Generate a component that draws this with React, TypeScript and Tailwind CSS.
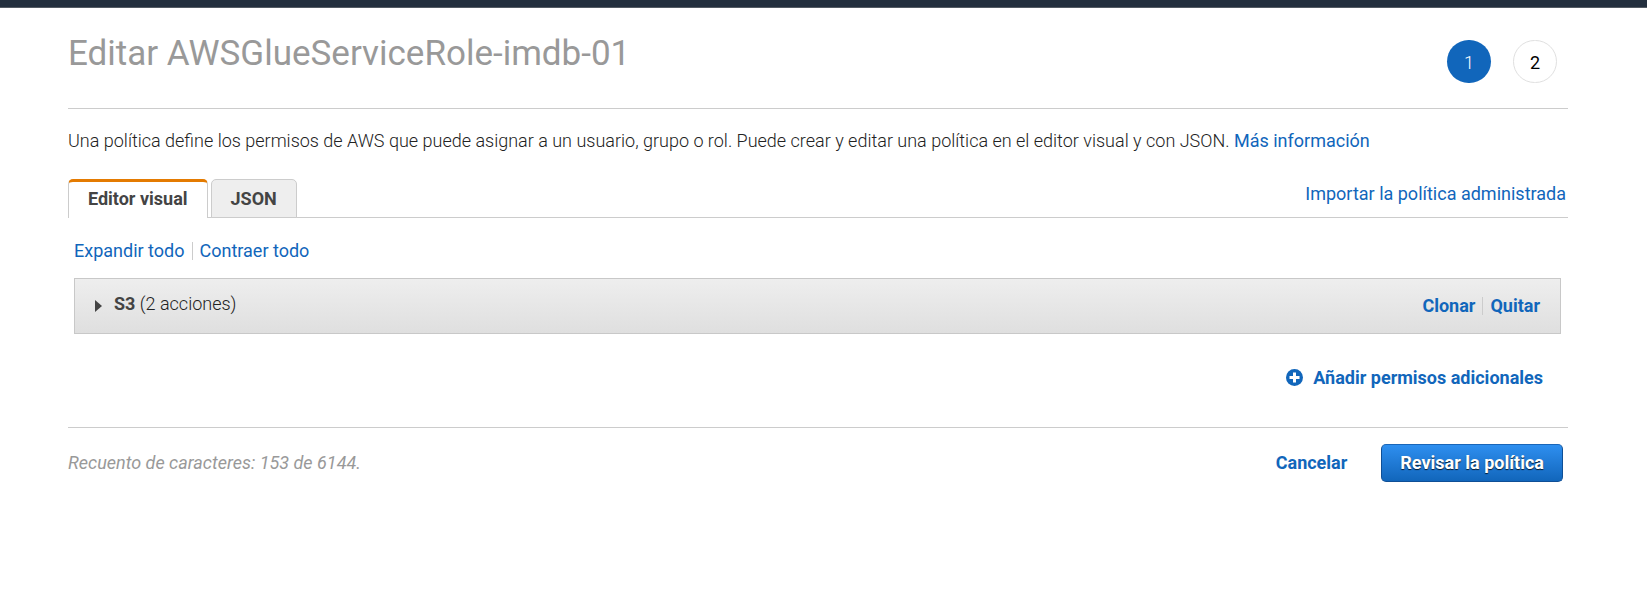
import React from "react";

const link = "font-normal text-[#1166bb] hover:underline";

function Divider() {
  return <span aria-hidden="true" className="h-[18px] w-px bg-[#cccccc]" />;
}

function Header() {
  return (
    <header className="flex items-start justify-between border-b border-[#cccccc] pt-5 pb-[25px]">
      <h1 className="text-[35px] leading-[52px] text-[#999999]">Editar AWSGlueServiceRole-imdb-01</h1>
      <ol className="mt-3 mr-[11px] flex gap-[22px] text-[18px]">
        <li
          aria-current="step"
          className="flex h-[43px] w-11 items-center justify-center rounded-full bg-[#1166bb] pt-0.5 font-light text-white"
        >
          1
        </li>
        <li className="flex h-[43px] w-11 items-center justify-center rounded-full border border-[#e0e0e0] pt-0.5 text-black">
          2
        </li>
      </ol>
    </header>
  );
}

function Tabs() {
  return (
    <div className="flex items-start justify-between border-b border-[#cccccc]">
      <div role="tablist" className="-mb-px flex gap-[3px] font-bold">
        <button
          role="tab"
          aria-selected="true"
          className="h-[39px] rounded-t-[5px] border-x border-t-3 border-[#cccccc] border-t-[#e47b01] bg-white px-[19px] pb-0.5"
        >
          Editor visual
        </button>
        <button
          role="tab"
          aria-selected="false"
          className="h-[39px] rounded-t-[5px] border border-[#cccccc] bg-[#eeeeee] px-[19px]"
        >
          JSON
        </button>
      </div>
      <a href="#importar" className={`${link} mt-[3px] mr-[2px]`}>
        Importar la política administrada
      </a>
    </div>
  );
}

function ServicePanel() {
  return (
    <div className="mt-[15px] flex h-14 items-center justify-between border border-[#c8c8c8] bg-linear-to-b from-[#eeeeee] to-[#dfdfdf] pr-5 pl-5">
      <button className="flex items-center gap-3 pb-1">
        <svg viewBox="0 0 7 12" className="mt-1 h-3 w-[7px]" aria-hidden="true">
          <path d="M0 0 7 6 0 12Z" fill="#444444" />
        </svg>
        <span className="font-light text-[#222222]">
          <strong className="font-bold text-[#444444]">S3</strong> (2 acciones)
        </span>
      </button>
      <div className="flex items-center gap-[7px] font-bold text-[#1166bb] text-shadow-[0_1px_1px_#ffffff]">
        <button>Clonar</button>
        <Divider />
        <button>Quitar</button>
      </div>
    </div>
  );
}

function Footer() {
  return (
    <footer className="flex items-center justify-between border-t border-[#cccccc] pt-4 pr-[5px]">
      <p className="text-[#999999] italic">Recuento de caracteres: 153 de 6144.</p>
      <div className="flex items-center gap-[34px] font-bold">
        <button className="text-[#1166bb]">Cancelar</button>
        <button className="h-[38px] rounded-[5px] border border-[#0f4f96] border-t-[#1a66b8] bg-linear-to-b from-[#2e8ff0] to-[#1166bb] px-[18px] text-white text-shadow-[0_1px_1px_#000000cc]">
          Revisar la política
        </button>
      </div>
    </footer>
  );
}

export default function App() {
  return (
    <div className="min-h-screen bg-white font-['Roboto',sans-serif] text-[18px] leading-6 text-[#444444]">
      <div className="h-2 border-b border-[#545b64] bg-[#232f3e]" />
      <main className="pr-[79px] pl-[68px]">
        <Header />
        <p className="mt-5 mb-[26px] font-light text-[#222222]">
          Una política define los permisos de AWS que puede asignar a un usuario, grupo o rol. Puede crear y editar una
          política en el editor visual y con JSON.{" "}
          <a href="#informacion" className={link}>
            Más información
          </a>
        </p>
        <Tabs />
        <section className="pr-[7px] pl-1.5">
          <div className="mt-[21px] flex items-center gap-[7px] text-[#1166bb]">
            <button>Expandir todo</button>
            <Divider />
            <button>Contraer todo</button>
          </div>
          <ServicePanel />
          <div className="mt-8 mb-[37px] flex justify-end pr-[18px]">
            <button className="flex items-center gap-2.5 font-bold text-[#1166bb]">
              <svg viewBox="0 0 17 17" className="mb-0.5 size-[17px]" aria-hidden="true">
                <circle cx="8.5" cy="8.5" r="8.5" fill="#1166bb" />
                <path d="M8.5 3.5v10M3.5 8.5h10" stroke="#ffffff" strokeWidth="3" />
              </svg>
              Añadir permisos adicionales
            </button>
          </div>
        </section>
        <Footer />
      </main>
    </div>
  );
}
